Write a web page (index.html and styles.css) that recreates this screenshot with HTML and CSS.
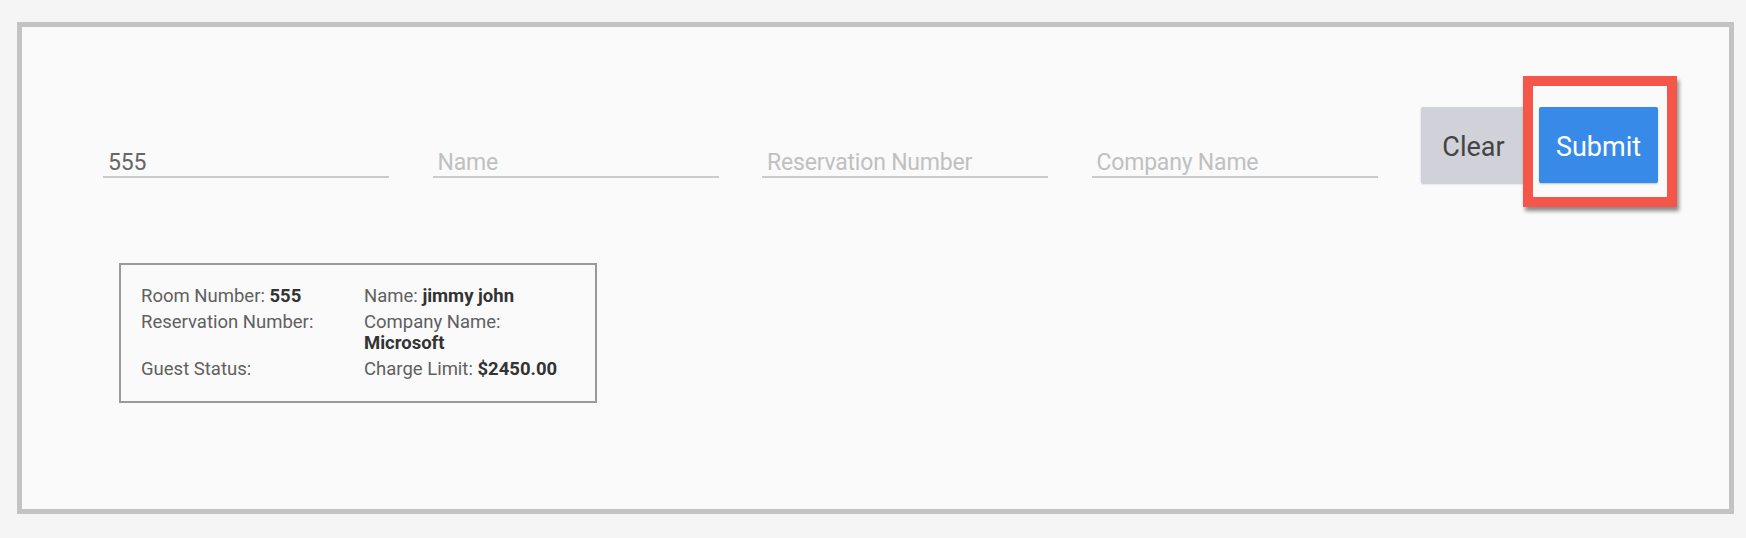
FILE: index.html
```html
<!DOCTYPE html>
<html lang="en">
<head>
<meta charset="utf-8">
<title>Guest Lookup</title>
<link rel="stylesheet" href="styles.css">
</head>
<body>
<div class="frame">
  <div class="search-row">
    <input class="field" type="text" value="555" placeholder="Room Number">
    <input class="field" type="text" placeholder="Name">
    <input class="field" type="text" placeholder="Reservation Number">
    <input class="field" type="text" placeholder="Company Name">
    <div class="actions">
      <button class="btn btn-clear" type="button">Clear</button>
      <div class="highlight-wrap">
        <button class="btn btn-submit" type="button">Submit</button>
        <div class="highlight"></div>
      </div>
    </div>
  </div>
  <div class="info-card">
    <div class="cell">Room Number: <b>555</b></div>
    <div class="cell">Name: <b>jimmy john</b></div>
    <div class="cell">Reservation Number:</div>
    <div class="cell">Company Name: <b>Microsoft</b></div>
    <div class="cell">Guest Status:</div>
    <div class="cell">Charge Limit: <b>$2450.00</b></div>
  </div>
</div>
</body>
</html>
```

FILE: styles.css
```css
* {
  box-sizing: border-box;
}

html, body {
  margin: 0;
  padding: 0;
  background: #f5f5f5;
  font-family: Roboto, "Noto Sans", sans-serif;
}

body {
  width: 1746px;
  height: 538px;
  overflow: hidden;
}

.frame {
  margin: 22px 0 0 17px;
  width: 1717px;
  height: 492px;
  border: 5px solid #c3c3c3;
  background: #fafafa;
  padding: 80px 0 0 81px;
}

.search-row {
  display: flex;
  align-items: flex-start;
  gap: 43.5px;
}

.field {
  width: 286px;
  height: 44px;
  margin-top: 27px;
  padding: 15px 5px 0 5px;
  border: none;
  border-bottom: 2px solid #cbcbcb;
  background: transparent;
  font-family: Roboto, "Noto Sans", sans-serif;
  font-size: 23px;
  letter-spacing: -0.2px;
  color: #666666;
  outline: none;
}

.field::placeholder {
  color: #c0c0c0;
}

.actions {
  display: flex;
  gap: 13px;
}

.btn {
  height: 76px;
  border: none;
  border-radius: 2px;
  font-family: Roboto, "Noto Sans", sans-serif;
  font-size: 27px;
  padding: 3px 0 0 0;
  box-shadow: 0 1px 2px rgba(0, 0, 0, 0.22);
}

.btn-clear {
  width: 105px;
  background: #d0d1d9;
  color: #444444;
}

.btn-submit {
  width: 119px;
  background: #378ae8;
  color: #ffffff;
}

.highlight-wrap {
  position: relative;
}

.highlight {
  position: absolute;
  left: -16px;
  top: -31px;
  width: 154px;
  height: 131px;
  border: 10px solid #f5564a;
  box-shadow: 2px 4px 4px rgba(0, 0, 0, 0.45);
  pointer-events: none;
}

.info-card {
  margin: 80px 0 0 16px;
  width: 478px;
  height: 140px;
  border: 2px solid #9a9a9a;
  padding: 21px 20px 0 20px;
  display: grid;
  grid-template-columns: 223px 205px;
  align-content: start;
  row-gap: 5px;
  font-size: 18.5px;
  line-height: 21px;
  color: #606060;
}

.cell b {
  color: #333333;
  font-weight: 700;
}
```
